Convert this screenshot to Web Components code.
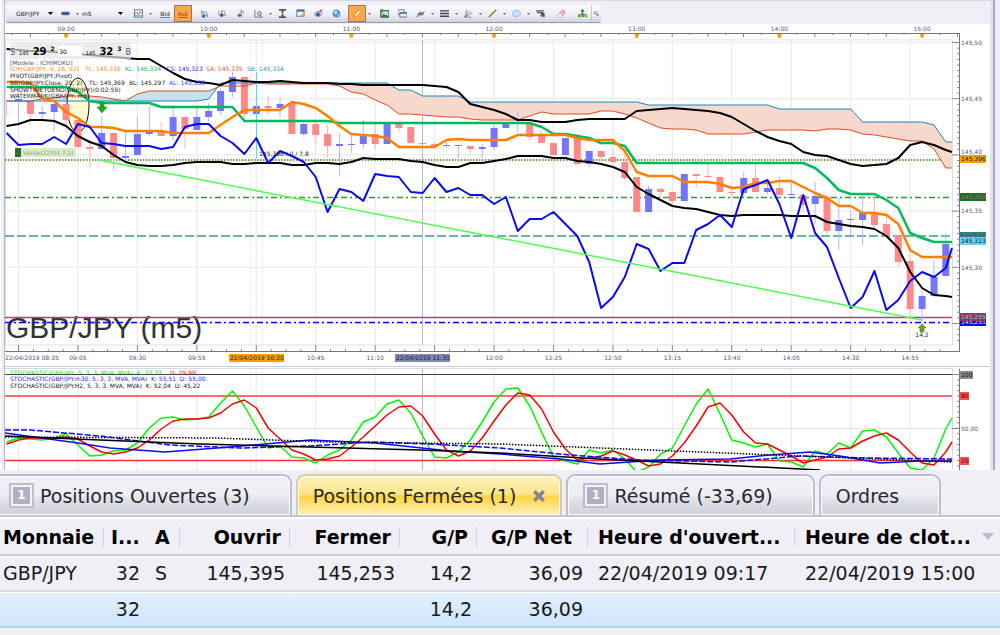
<!DOCTYPE html>
<html lang="fr">
<head>
<meta charset="utf-8">
<title>GBP/JPY (m5)</title>
<style>
  body {
    margin: 0;
    background: #efeff5;
    font-family: "DejaVu Sans", Verdana, sans-serif;
    color: #1a1a1a;
  }
</style>
</head>
<body>
<trading-desk></trading-desk>

<script>
  // ---------- icons, all on a 10x10 grid ----------
  const ICONS = {
    link: '<rect x="0" y="3" width="10" height="4" rx="2" fill="#50709c"/><path d="M2 5h6" stroke="#24405f"/>',
    chart: '<rect x=".5" y="1" width="9" height="8" fill="#fff" stroke="#3f76b4"/><path d="M1 6l2-2 2 2 2-3 2 2" fill="none" stroke="#c33"/><path d="M1 7.500h8" stroke="#4a4" />',
    zoom1: '<path d="M2 1v6M1 3h2M4 3v3" stroke="#777" stroke-width=".8"/><circle cx="6" cy="5" r="1.800" fill="#fff" stroke="#888"/><path d="M7 6l2 3" stroke="#555"/><circle cx="4" cy="8" r="1.800" fill="#3165b5"/>',
    zoom2: '<path d="M1 2v5M4 1v4" stroke="#777" stroke-width=".8"/><circle cx="6" cy="4" r="1.800" fill="#fff" stroke="#888"/><path d="M7 6l2 2" stroke="#555"/><circle cx="4" cy="7" r="2" fill="#2d5fae"/>',
    zoom3: '<path d="M6 0v8M4 3h4M8 2v4" stroke="#888" stroke-width=".8"/><circle cx="4" cy="7" r="2" fill="#3a70c0"/>',
    find: '<path d="M1 1v8h8" fill="none" stroke="#777"/><circle cx="6" cy="5" r="2" fill="#dfe6ef" stroke="#555"/><path d="M7 7l2 2" stroke="#555"/>',
    fit: '<path d="M1 1h8M1 9h8" stroke="#222" stroke-width="1.500"/><path d="M5 1v8" stroke="#222"/><path d="M3 2.500h4L5 5zM3 7.500h4L5 5z" fill="#3c8a2d"/>',
    note: '<rect x="1" y="1" width="8" height="7" fill="#fff" stroke="#3f70b0"/><path d="M1 2h8" stroke="#3f70b0" stroke-width="2"/><path d="M4 8l5-4 1 2-5 3z" fill="#f3a51c"/>',
    eye: '<path d="M0 6c3-4 7-4 9-1-2 4-6 4-9 1z" fill="#cfdcf0" stroke="#678"/><circle cx="4.500" cy="6" r="2" fill="#24589f"/><path d="M6 3l3-2" stroke="#c33" stroke-width="1.500"/>',
    globe: '<circle cx="5" cy="5" r="4" fill="#4c9bd2" stroke="#5a94c0"/><path d="M2 3l3-1 1 2-2 2zM6 6l2-1-1 3z" fill="#d4eaf6"/>',
    pencil: '<path d="M1 9l1-3 5-5 2 2-5 5z" fill="#fff3bd" stroke="#a97b2e" stroke-width=".8"/>',
    image: '<rect x="1" y="2" width="9" height="7" fill="#cde7f5" stroke="#222"/><path d="M1 9l3-4 2 2 1-1 3 3z" fill="#2d8b2a"/><circle cx="2" cy="2" r="2" fill="#35a028"/>',
    window: '<path d="M0 1h7v5H0z" fill="#fff" stroke="#4b6b9b"/><path d="M2 4h8v5H2z" fill="#e7eef8" stroke="#4b6b9b"/><path d="M2 4.500h8" stroke="#4b6b9b" stroke-width="1.500"/>',
    fork: '<path d="M1 9l4-6M4 8l3-5M7 7l2-4M2 5l6 1" stroke="#444"/>',
    lines: '<path d="M0 2h10M0 5h10M0 8h10" stroke="#34445c" stroke-width="1.500"/>',
    fan: '<path d="M1 9l2-8M1 9l5-7M1 9l8-5M1 9h7" stroke="#666" stroke-width=".8"/>',
    line: '<path d="M1 9l8-8" stroke="#4a9a1c" stroke-width="1.500"/>',
    oval: '<ellipse cx="5" cy="5" rx="4.500" ry="3.500" fill="#c6e2fa" stroke="#8bb9e6"/>',
    text: '<path d="M0 2h9M1 4h7" stroke="#555" stroke-width="1.500"/><circle cx="7" cy="7" r="2" fill="#2d64bd"/><path d="M6 5h3v4" fill="none" stroke="#234"/>',
    eraser: '<path d="M1 7l5-6 3 2-4 6H2z" fill="#f6b9bd" stroke="#b06a72" stroke-width=".8"/><path d="M1 7l2-2 3 2-1 2H2z" fill="#fff"/>',
    tree: '<circle cx="5" cy="2" r="1.800" fill="#3c79c4"/><path d="M5 3v3M2 6h6" stroke="#333"/><rect x="0" y="6" width="3" height="3" fill="#5aa61e"/><rect x="4" y="6" width="3" height="3" fill="#5aa61e"/><rect x="8" y="6" width="2" height="3" fill="#5aa61e"/>',
    more: '<path d="M2 3h5M2 5h5" stroke="#888"/><path d="M5 6h4l-2 3z" fill="#777"/>'
  };

  // ---------- chart data: one value per 5 minute bar, first bar is -1 ----------
  const CHIKOU = [133,145,144,144,137,144,124,127,143,144,146,146,146,149,147,127,124,124,136,143,154,138,163,151,156,162,177,212,189,192,201,174,176,177,192,193,178,192,188,195,195,204,197,231,219,219,212,224,236,262,308,297,277,244,249,271,263,263,230,224,215,227,189,185,180,204,238,195,233,247,278,308,297,271,310,300,281,272,277,268,248];
  const TENKAN = [82,82,83,99,101,112,118,127,127,128,131,131,131,131,133,133,133,133,125,117,110,110,110,110,102,104,108,116,126,134,135,136,138,147,147,147,147,140,139,140,140,140,140,135,135,135,135,135,138,140,140,140,151,172,176,176,176,182,182,182,184,188,187,183,183,181,181,187,193,198,206,206,213,213,215,224,250,257,257,257,257];
  const KIJUN = [87,87,87,87,87,87,92,101,103,103,103,103,103,107,107,107,107,107,107,107,121,121,121,121,121,121,121,121,123,123,123,123,123,123,123,123,123,123,123,123,123,123,123,123,123,127,134,134,136,138,143,143,146,163,163,163,163,163,163,163,163,163,163,163,163,163,163,163,168,178,190,194,194,194,200,208,233,238,242,242,242];
  const BAND_UP = [49,50,51,51,52,53,54,55,56,57,58,59,59,66,73,79,82,83,85,80,81,82,82,81,82,83,83,83,84,84,85,85,85,85,85,85,86,87,92,104,107,110,114,120,120,122,122,122,120,119,119,119,119,111,110,109,108,109,110,111,113,117,124,131,137,141,144,152,155,156,160,164,166,165,164,158,145,142,145,150,152];
  const BAND_LOW = [126,124,120,120,121,126,136,142,146,155,162,165,166,166,165,163,162,162,162,164,164,163,163,163,165,165,163,163,164,162,158,159,159,159,161,162,165,167,167,163,163,161,159,156,156,156,158,158,161,162,164,167,172,187,194,200,206,208,209,212,215,216,215,215,215,215,216,216,216,222,224,226,227,229,236,248,272,288,295,296,297];
  const SPAN_A = [101,101,101,99,98,96,96,96,97,99,101,94,91,91,91,91,91,91,86,86,86,83,84,84,84,84,84,84,86,92,94,100,105,114,114,115,116,117,117,119,120,120,120,120,116,112,114,114,114,114,111,111,114,118,123,128,129,129,130,134,134,134,134,132,130,130,130,130,131,129,129,130,134,135,137,139,141,141,149,168,168];
  const SPAN_B = [101,101,101,101,101,101,101,101,101,101,101,101,101,101,101,101,101,99,83,83,83,83,83,83,83,83,83,83,83,83,83,83,83,90,90,96,96,96,96,102,102,102,102,102,102,102,102,102,102,102,102,102,102,102,105,105,105,105,105,105,105,105,105,105,105,109,109,109,109,109,109,109,122,122,122,122,122,122,125,142,142];
  // bar, high, body top, body bottom, low, up?
  const CANDLES = [
    [-1,101,108,108,117,0],[0,94,99,101,122,1],[1,101,101,114,125,0],[2,106,112,114,119,1],[3,100,104,112,131,1],[4,104,104,120,132,0],
    [5,120,120,147,147,0],[6,140,147,149,169,0],[7,116,133,149,149,1],[8,133,133,158,170,0],[9,132,156,158,162,1],[10,117,134,155,155,1],
    [11,106,132,134,136,1],[12,122,131,136,136,0],[13,105,117,136,141,1],[14,117,117,129,149,0],[15,108,117,130,130,1],[16,103,111,117,122,1],
    [17,88,91,111,115,1],[18,72,77,92,97,1],[19,77,77,114,124,0],[20,98,106,114,114,1],[21,96,106,108,115,0],[22,98,104,108,117,1],
    [23,103,103,134,134,0],[24,122,124,134,137,1],[25,122,124,135,145,0],[26,125,134,146,158,0],[27,134,144,146,175,1],[28,135,144,145,153,1],
    [29,120,134,144,149,1],[30,124,134,144,149,0],[31,124,124,144,144,1],[32,124,124,128,132,0],[33,127,127,143,143,0],[34,143,143,144,144,0],
    [35,142,144,146,146,0],[36,142,145,146,148,1],[37,145,145,146,158,1],[38,146,146,149,153,0],[39,144,147,149,158,1],[40,125,128,147,150,1],
    [41,123,123,128,128,1],[42,112,122,123,133,1],[43,123,123,137,140,0],[44,130,136,143,143,0],[45,143,143,155,156,0],[46,138,138,155,156,1],
    [47,134,136,164,166,0],[48,151,151,164,167,1],[49,151,151,157,159,0],[50,149,157,162,165,0],[51,152,162,178,180,0],[52,177,177,212,213,0],
    [53,186,189,212,212,1],[54,188,189,192,197,0],[55,192,192,201,204,0],[56,174,174,201,201,1],[57,174,174,176,187,0],[58,164,176,177,178,0],
    [59,175,177,192,192,0],[60,190,192,193,198,0],[61,172,178,193,196,1],[62,164,178,192,192,0],[63,180,188,192,194,1],[64,176,188,195,198,0],
    [65,182,194,195,195,1],[66,195,195,205,212,0],[67,182,196,204,224,1],[68,195,197,231,234,0],[69,198,220,231,250,1],[70,210,219,220,235,1],
    [71,195,213,220,245,1],[72,195,213,225,229,0],[73,212,224,236,238,0],[74,234,236,262,267,0],[75,247,261,309,317,0],[76,288,296,309,322,1],
    [77,261,277,296,297,1],[78,233,244,276,276,1]
  ];
  const STOCH_K = [442,438,439,440,438,434,445,456,455,451,450,443,428,418,417,420,419,417,403,391,406,427,448,446,457,458,463,455,450,440,422,417,404,400,413,436,457,458,452,440,422,402,389,388,406,432,457,461,464,450,453,450,459,472,467,454,448,426,404,389,414,440,443,447,444,461,462,467,451,454,443,448,431,430,437,453,468,470,458,429,418];
  const STOCH_D = [444,440,438,438,438,437,439,446,452,454,452,448,440,429,421,419,419,418,413,404,400,408,428,439,450,454,460,459,456,447,437,426,415,407,406,416,434,450,456,451,438,421,405,393,395,409,432,449,460,458,456,451,455,460,466,464,456,443,426,407,403,415,432,443,444,450,456,463,460,457,449,448,441,436,433,440,452,463,465,452,442];

  const LEFT = 5, RIGHT = 952, BAR = 11.889;
  const barX = k => Math.min(RIGHT, Math.max(LEFT, 18.5 + BAR * k));
  const pts = (arr, from = 0, to = arr.length) =>
    arr.slice(from, to).map((y, i) => barX(i + from - 1).toFixed(1) + ',' + y);
  const series = (arr, color, width) =>
    `<polyline points="${pts(arr).join(' ')}" fill="none" stroke="${color}" stroke-width="${width}" stroke-linejoin="round"/>`;
  const cloud = (from, to, color) =>
    `<polygon points="${pts(SPAN_A, from, to).concat(pts(SPAN_B, from, to).reverse()).join(' ')}" fill="${color}"/>`;
  const path = (p, color, width, dash = '') =>
    `<polyline points="${p}" fill="none" stroke="${color}" stroke-width="${width}" stroke-dasharray="${dash}"/>`;
  const line = (x1, y1, x2, y2, color, width = 1, dash = '') =>
    `<line x1="${x1}" y1="${y1}" x2="${x2}" y2="${y2}" stroke="${color}" stroke-width="${width}" stroke-dasharray="${dash}"/>`;
  const text = (x, y, str, color = '#55557f', anchor = 'start') =>
    `<text x="${x}" y="${y}" fill="${color}" text-anchor="${anchor}">${str}</text>`;
  const tag = (x, y, w, str, bg, color) =>
    `<rect x="${x}" y="${y}" width="${w}" height="8" fill="${bg}"/>` + text(x + 1, y + 6, str, color);

  const verticals = (top, bottom) => {
    let out = '';
    for (let k = 0; k < 79; k += 5) {
      out += line(barX(k), top, barX(k), bottom, '#e9e9e9');
    }
    out += line(250.5, top, 250.5, bottom, '#dcdcdc', 1, '1 2');
    out += line(262.5, top, 262.5, bottom, '#dcdcdc', 1, '1 2');
    return out + line(422.5, top, 422.5, bottom, '#b4b8d8');
  };

  const CHART_CSS = `
    :host { display: block; position: relative; background: #fff; }
    svg { display: block; width: 100%; height: auto; }
    text { font-family: "DejaVu Sans", Verdana, sans-serif; font-size: 6px; white-space: pre; }
    .watermark { font-family: "Liberation Sans", Arial, sans-serif; font-size: 30px; }
  `;

  class ToolButton extends HTMLElement {
    connectedCallback() {
      const root = this.attachShadow({mode: 'open'});
      const icon = ICONS[this.getAttribute('icon')];
      root.innerHTML = `
      <style>
        :host { display: flex; align-items: center; }
        button {
          width: 18px;
          height: 17px;
          padding: 0;
          border: 1px solid transparent;
          background: none;
          font: 6px "DejaVu Sans", sans-serif;
          color: #222;
          display: flex;
          align-items: center;
          justify-content: center;
        }
        :host([active]) .main { background: #ffa646; border-color: #8a7a70; }
        :host([narrow]) .main { width: 10px; border-left: 1px solid #c6c6d6; }
        .drop { width: 6px; }
        svg { width: 9px; height: 9px; display: block; }
        .drop svg { width: 3px; height: 2px; }
      </style>
      <button class="main" aria-label="${this.getAttribute('icon') || 'prix'}">
        ${icon ? `<svg viewBox="0 0 10 10">${icon}</svg>` : '<slot></slot>'}
      </button>
      ${this.hasAttribute('menu') ? '<button class="drop" aria-label="menu"><svg viewBox="0 0 3 2"><path d="M0 0h3L1.500 2z" fill="#667"/></svg></button>' : ''}
      `;
    }
  }
  customElements.define('tool-button', ToolButton);

  class ChartToolbar extends HTMLElement {
    connectedCallback() {
      this.attachShadow({mode: 'open'}).innerHTML = `
      <style>
        :host { display: flex; padding: 4px 0 1px 1px; background: #efeff5; border-top: 1px solid #d9d9e4; }
        .bar {
          display: flex;
          align-items: center;
          box-sizing: border-box;
          height: 18px;
          padding-left: 8px;
          background: linear-gradient(#fcfcfe, #ececf3 60%, #d0d0de);
          border-bottom: 1px solid #9a9ab6;
          border-radius: 2px;
        }
        .group { display: flex; margin-right: 3px; }
        select {
          appearance: none;
          height: 14px;
          padding: 0 2px;
          border: 0;
          background: transparent;
          font: 6px "DejaVu Sans", sans-serif;
          color: #222;
        }
        label { display: flex; align-items: center; }
        label svg { width: 5px; height: 3px; margin-right: 3px; }
        .pair { width: 34px; }
        .period { width: 38px; }
        .bid { border-bottom: 1px solid #3a8ee0; }
        .ask { color: #a33a10; border-bottom: 1px solid #c8501c; }
      </style>
      <div class="bar">
        <div class="group">
          <label><select class="pair" aria-label="Instrument"><option>GBP/JPY</option></select>
            <svg viewBox="0 0 5 3"><path d="M0 0h5L2.500 3z"/></svg></label>
          <tool-button icon="link" menu></tool-button>
          <label><select class="period" aria-label="Période"><option>m5</option></select>
            <svg viewBox="0 0 5 3"><path d="M0 0h5L2.500 3z"/></svg></label>
        </div>
        <div class="group"><tool-button icon="chart" menu></tool-button></div>
        <div class="group">
          <tool-button><span class="bid">Bid</span></tool-button>
          <tool-button active><span class="ask">Ask</span></tool-button>
        </div>
        <div class="group">
          <tool-button icon="zoom1"></tool-button>
          <tool-button icon="zoom2"></tool-button>
          <tool-button icon="zoom3"></tool-button>
          <tool-button icon="find" menu></tool-button>
          <tool-button icon="fit"></tool-button>
          <tool-button icon="note"></tool-button>
          <tool-button icon="eye"></tool-button>
          <tool-button icon="globe"></tool-button>
        </div>
        <div class="group"><tool-button icon="pencil" active menu></tool-button></div>
        <div class="group">
          <tool-button icon="image"></tool-button>
          <tool-button icon="window"></tool-button>
          <tool-button icon="fork" menu></tool-button>
          <tool-button icon="lines" menu></tool-button>
          <tool-button icon="fan" menu></tool-button>
          <tool-button icon="line" menu></tool-button>
          <tool-button icon="oval" menu></tool-button>
          <tool-button icon="text"></tool-button>
        </div>
        <div class="group"><tool-button icon="eraser"></tool-button></div>
        <tool-button icon="tree"></tool-button>
        <tool-button icon="more" narrow></tool-button>
      </div>
      `;
    }
  }
  customElements.define('chart-toolbar', ChartToolbar);

  // one-click sell / buy box over the chart
  class QuoteTicket extends HTMLElement {
    connectedCallback() {
      this.attachShadow({mode: 'open'}).innerHTML = `
      <style>
        :host {
          display: flex;
          align-items: center;
          justify-content: space-between;
          box-sizing: border-box;
          width: 121px;
          height: 16px;
          background: rgba(228, 228, 230, .7);
        }
        button {
          display: flex;
          align-items: baseline;
          gap: 4px;
          padding: 0;
          border: 0;
          background: none;
          font: 5px "DejaVu Sans", sans-serif;
          color: #000;
        }
        .side { font-size: 8px; color: #55557f; }
        b { font-size: 10px; }
        sup { font-size: 6px; font-weight: bold; line-height: 1; vertical-align: baseline; align-self: flex-start; }
        input {
          width: 24px;
          height: 10px;
          box-sizing: border-box;
          padding: 0 1px;
          border: 0;
          background: #fff;
          font: 6px "DejaVu Sans", sans-serif;
        }
      </style>
      <button><span class="side">S</span><span>145</span><b>29</b><sup>2</sup></button>
      <input value="30" aria-label="Quantité">
      <button><span>145</span><b>32</b><sup>3</sup><span class="side">B</span></button>
      `;
    }
  }
  customElements.define('quote-ticket', QuoteTicket);

  class PriceChart extends HTMLElement {
    connectedCallback() {
      this.attachShadow({mode: 'open'}).innerHTML = `
      <style>
        ${CHART_CSS}
        quote-ticket { position: absolute; left: 5px; top: 19px; }
      </style>
      <svg viewBox="5 24 985 342" role="img" aria-label="GBP/JPY">
        ${this.grid()}
        <text class="watermark" x="6" y="338" fill="#333">GBP/JPY (m5)</text>
        ${this.levels()}
        ${cloud(4, 19, '#c5e2ee')}
        ${cloud(21, SPAN_A.length, '#f7d8cc')}
        <ellipse cx="78" cy="105" rx="11" ry="27" fill="#fffbd2" stroke="#111"/>
        ${this.candles()}
        ${series(SPAN_A, '#dc4a20', 1)}
        ${series(SPAN_B, '#1585c5', 1)}
        ${line(256.5, 72, 256.5, 158, '#50dcff')}
        ${series(KIJUN, '#00bb5c', 2.5)}
        ${series(TENKAN, '#ff8000', 2.5)}
        ${series(BAND_UP, '#000', 2)}
        ${series(BAND_LOW, '#000', 2)}
        ${series(CHIKOU, '#0a0aef', 2)}
        ${line(101.5, 160.5, 922, 320, '#4cff4c', 1.5)}
        <path d="M100 102h4v5h3l-5 6-5-6h3z" fill="#22a822" stroke="#18861a" stroke-width=".5"/>
        <path d="M922 324l4 4h-2v4h-4v-4h-2z" fill="#6aa61c" stroke="#3a7a10" stroke-width=".5"/>
        ${text(922, 337, '14,2', '#222', 'middle')}
        <rect x="15" y="148" width="6" height="9" fill="#2f6d25"/>
        <rect x="21" y="148" width="55" height="9" fill="#dde9cf"/>
        ${text(23, 155, 'Vente(22/04,7,2)', '#8cab7d')}
        ${text(259, 156, '145,396 / 0 / 7,8', '#222')}
        ${this.legend()}
        ${this.priceAxis()}
        ${this.timeAxis()}
      </svg>
      <quote-ticket></quote-ticket>
      `;
    }

    grid() {
      let out = '<rect x="5.5" y="40" width="947" height="305" fill="none" stroke="#dce0ea"/>';
      for (let i = 0; i < 6; i++) {
        out += line(LEFT, 42.5 + i * 56.2, RIGHT, 42.5 + i * 56.2, '#e9e9e9');
      }
      return out + verticals(40, 345);
    }

    levels() {
      return line(LEFT, 160, RIGHT, 160, '#3c7a10', 1.5, '1.5 1.5')
        + line(LEFT, 197.5, RIGHT, 197.5, '#2f9a2f', 1.5, '6 3 2 3')
        + line(LEFT, 236, RIGHT, 236, '#3a9a94', 1.5, '9 3')
        + line(LEFT, 317.5, RIGHT, 317.5, '#a8447a', 1.5)
        + line(LEFT, 322.5, RIGHT, 322.5, '#0a0aff', 1.5, '6 3 2 3');
    }

    candles() {
      return CANDLES.map(([k, high, top, bottom, low, up]) => {
        const x = barX(k);
        const body = up ? '#7474ff' : '#ff8888';
        const wick = up ? '#b4b4ff' : '#ffb4b4';
        return line(x, high, x, low, wick)
          + (k < 0 ? '' : `<rect x="${(x - 3.5).toFixed(1)}" y="${top}" width="7" height="${bottom - top}" fill="${body}"/>`);
      }).join('');
    }

    legend() {
      return text(10, 65, '[Modele : ICHIMOKU]')
        + text(10, 71, 'ICH(GBP/JPY, 9, 26, 52)', '#ff8c1a')
        + text(85, 71, 'TL: 145,336', '#ff8c1a')
        + text(125, 71, 'KL: 145,334', '#16b35c')
        + text(166, 71, 'CS: 145,323', '#2a2aff')
        + text(206, 71, 'SA: 145,335', '#e05a30')
        + text(247, 71, 'SB: 145,334', '#2c93cc')
        + text(10, 78, 'PIVOT(GBP/JPY,Pivot)', '#222')
        + text(10, 85, 'BB(GBP/JPY.Close, 20, 2)', '#222')
        + text(89, 85, 'TL: 145,369', '#222')
        + text(129, 85, 'BL: 145,297', '#222')
        + text(169, 85, 'AL: 145,333', '#3a3aff')
        + text(10, 92, 'SHOWTIMETOEND(GBP/JPY)(0:02:59)', '#222')
        + text(10, 98, 'WATERMARK(GBP/JPY, m5)', '#222');
    }

    priceAxis() {
      let out = line(959.5, 33, 959.5, 351, '#777');
      for (let i = 0; i < 54; i++) {
        const y = 42.5 + i * 5.62;
        out += i % 10 ? line(957, y, 959, y, '#888') : line(952, y, 959, y, '#888');
      }
      // 145,40 sits a little higher, clear of the 145,396 tag
      [['145,50', 45], ['145,45', 101], ['145,40', 154], ['145,35', 213], ['145,30', 270]].forEach(([p, y]) => {
        out += text(961, y, p);
      });
      return out
        + tag(960, 155, 26, '145,396', '#ff9c00', '#222')
        + tag(960, 193, 26, '145,362', '#0d7a0d', '#d040d0')
        + tag(960, 232, 26, '145,328', '#178888', '#d22')
        + tag(960, 237, 26, '145,323', '#5cd4ff', '#123')
        + tag(960, 318, 26, '145,251', '#0a0aef', '#ee4')
        + tag(960, 313, 26, '145,255', '#9c2f62', '#5cd4dd');
    }

    timeAxis() {
      let out = line(5, 33.5, 960, 33.5, '#777') + line(5, 351.5, 960, 351.5, '#777');
      for (let x = 12.5, i = 0; x < 958; x += 17.83, i++) {
        out += line(x, 34, x, i % 2 ? 37 : 35, '#888');
      }
      for (let x = 18.5, i = 0; x < 952; x += 14.86, i++) {
        out += line(x, i % 4 ? 349 : 345, x, 351, '#888');
      }
      for (let h = 0; h < 7; h++) {
        const x = barX(4 + h * 12);
        out += text(x, 31, String(h + 9).padStart(2, '0') + ':00', '#55557f', 'middle')
          + `<path d="M${x - 2.5} 34h5l-1.500 4h-2z" fill="#ffa200"/>`;
      }
      out += text(5, 360, '22/04/2019 08:35');
      ['09:05', '09:30', '09:55', '', '10:45', '11:10', '', '12:00', '12:25', '12:50', '13:15', '13:40', '14:05', '14:30', '14:55'].forEach((t, i) => {
        out += text(barX(5 + i * 5), 360, t, '#55557f', 'middle');
      });
      return out
        + tag(229, 354, 55, '22/04/2019 10:20', '#ff9c00', '#222')
        + tag(395, 354, 55, '22/04/2019 11:30', '#8088b8', '#222');
    }
  }
  customElements.define('price-chart', PriceChart);

  class StochasticChart extends HTMLElement {
    connectedCallback() {
      this.attachShadow({mode: 'open'}).innerHTML = `
      <style>${CHART_CSS} :host { border-top: 1px solid #c3cddf; }</style>
      <svg viewBox="5 367 985 103" role="img" aria-label="STOCHASTIC">
        <path d="M5 368.500h947.500V470" fill="none" stroke="#d4dae8"/>
        ${verticals(369, 470)}
        ${line(LEFT, 428.5, RIGHT, 428.5, '#e4e4e4')}
        ${text(10, 375, 'STOCHASTIC(GBP/JPY, 5, 3, 3, MVA, MVA)  K: 33,33', '#00f000')}
        ${text(170, 375, 'D: 29,99', '#f00')}
        ${line(LEFT, 374.5, RIGHT, 374.5, '#444')}
        ${text(10, 381, 'STOCHASTIC(GBP/JPY.m30, 5, 3, 3, MVA, MVA)  K: 55,51  D: 55,00', '#2a2aff')}
        ${text(10, 388, 'STOCHASTIC(GBP/JPY.H2, 5, 3, 3, MVA, MVA)  K: 52,04  D: 45,22', '#222')}
        ${line(LEFT, 396, RIGHT, 396, '#ff6a6a', 2)}
        ${line(LEFT, 460.5, RIGHT, 460.5, '#ff3030', 1.5)}
        ${series(STOCH_K, '#00f800', 1.5)}
        ${series(STOCH_D, '#f80000', 1.5)}
        ${path('5,433 78,443 110,448 165,452 230,447 310,440 375,443 450,451 500,454 560,459 600,464 660,460 730,459 770,455 810,452 840,456 880,463 920,461 952,461', '#0a0aff', 1.5)}
        ${path('5,430 30,430 100,436 170,445 240,448 310,446 370,442 430,444 500,448 570,455 640,460 730,462 800,456 870,458 952,459', '#0a0aff', 1.5, '6 2')}
        ${path('5,436 100,440 200,444 310,447 420,450 500,453 600,459 700,464 820,470', '#000', 1.5)}
        ${path('5,437 215,438 330,442 500,444 600,448 700,452 800,456 952,462', '#000', 1.5, '1.500 1.500')}
        ${this.axis()}
      </svg>
      `;
    }

    axis() {
      let out = line(959.5, 369, 959.5, 470, '#777');
      for (let y = 374.5; y < 470; y += 5.38) {
        out += line(957, y, 959, y, '#888');
      }
      return out
        + line(952, 374.5, 959, 374.5, '#888')
        + line(952, 428.5, 959, 428.5, '#888')
        + tag(960, 371, 13, '100', '#8c8c8c', '#111')
        + tag(960, 392, 9, '80', '#ff5050', '#500')
        + text(961, 431, '50,00')
        + tag(960, 457, 9, '20', '#ff5050', '#500');
    }
  }
  customElements.define('stochastic-chart', StochasticChart);

  class PositionTab extends HTMLElement {
    connectedCallback() {
      this.attachShadow({mode: 'open'}).innerHTML = `
      <style>
        :host { display: block; }
        button {
          display: flex;
          align-items: center;
          height: 41px;
          padding: 0 40px 0 15px;
          border: 2px solid #bcbcd2;
          border-bottom: 0;
          border-radius: 9px 9px 0 0;
          box-shadow: inset 0 0 0 1px #fff;
          background: linear-gradient(#efeff5 45%, #e1e1ea 60%, #d0d0dc);
          font: 19px "DejaVu Sans", Verdana, sans-serif;
          color: #2a2a2a;
          white-space: nowrap;
        }
        :host([selected]) button {
          padding-right: 14px;
          border-color: #d6cfae;
          background: linear-gradient(#fdf2bd, #fde58c 45%, #ffd640 52%, #ffe07a 75%, #fff0b4);
        }
        .badge {
          width: 17px;
          height: 17px;
          margin: 0 8px 0 2px;
          border: 2px solid #f3f3f8;
          outline: 2px solid #bdbdcd;
          background: #b0b0c4;
          color: #fff;
          font: bold 12px/17px "DejaVu Sans", sans-serif;
        }
        .close { width: 14px; height: 14px; margin-left: 16px; }
      </style>
      <button role="tab">
        ${this.hasAttribute('badge') ? `<span class="badge">${this.getAttribute('badge')}</span>` : ''}
        <slot></slot>
        ${this.hasAttribute('selected') ? '<svg class="close" viewBox="0 0 12 12"><path d="M2 2l8 8M10 2l-8 8" stroke="#8582a0" stroke-width="3"/></svg>' : ''}
      </button>
      `;
    }
  }
  customElements.define('position-tab', PositionTab);

  class PositionsTable extends HTMLElement {
    connectedCallback() {
      this.attachShadow({mode: 'open'}).innerHTML = `
      <style>
        :host { display: block; border-top: 2px solid #fff; }
        table { width: 100%; table-layout: fixed; border-collapse: collapse; font-size: 19px; line-height: 22px; }
        th, td { padding: 0 5px 0 3px; text-align: right; white-space: nowrap; overflow: hidden; }
        th {
          height: 35px;
          padding-right: 9px;
          font-weight: bold;
          color: #000;
          border-bottom: 2px solid #c8c8dc;
          background: linear-gradient(#d3d3df, #d3d3df) right center / 1px 20px no-repeat;
        }
        td { height: 34px; border-bottom: 2px solid #d8d8e2; box-shadow: inset 0 1px #fff; }
        .start { text-align: left; padding-left: 10px; }
        .first { text-align: left; padding-left: 3px; padding-right: 0; }
        th.tight { padding-left: 7px; padding-right: 0; background: none; }
        td.tight { padding-right: 3px; padding-left: 0; }
        .action { padding-left: 12px; padding-right: 0; text-align: left; }
        th.net { padding-right: 16px; }
        th.sort { background: none; padding-right: 6px; }
        .head { display: flex; align-items: center; justify-content: space-between; }
        .head svg { width: 12px; height: 8px; }
        .total td { background: linear-gradient(#e3f1ff, #cde5fc); border-color: #b5d2e6; }
      </style>
      <table>
        <colgroup>
          <col style="width: 10.400%"><col style="width: 3.900%"><col style="width: 3.700%">
          <col style="width: 11%"><col style="width: 11%"><col style="width: 7.700%">
          <col style="width: 11.100%"><col style="width: 20.700%"><col>
        </colgroup>
        <thead>
          <tr>
            <th class="first">Monnaie</th><th class="start tight">I...</th><th class="action">A</th>
            <th>Ouvrir</th><th>Fermer</th><th>G/P</th><th class="net">G/P Net</th>
            <th class="start">Heure d'ouvert...</th>
            <th class="start sort"><span class="head">Heure de clot...
              <svg viewBox="0 0 12 8"><path d="M0 0h12L6 7z" fill="#bcbcd2"/></svg></span></th>
          </tr>
        </thead>
        <tbody>
          <tr>
            <td class="first">GBP/JPY</td><td class="tight">32</td><td class="action">S</td>
            <td>145,395</td><td>145,253</td><td>14,2</td><td>36,09</td>
            <td class="start">22/04/2019 09:17</td><td class="start">22/04/2019 15:00</td>
          </tr>
          <tr class="total">
            <td></td><td class="tight">32</td><td></td><td></td><td></td>
            <td>14,2</td><td>36,09</td><td></td><td></td>
          </tr>
        </tbody>
      </table>
      `;
    }
  }
  customElements.define('positions-table', PositionsTable);

  class TradingDesk extends HTMLElement {
    connectedCallback() {
      this.attachShadow({mode: 'open'}).innerHTML = `
      <style>
        :host { display: block; overflow: hidden; }
        .charts {
          border-left: 1px solid #fff;
          padding: 0 7px 0 3px;
          background: linear-gradient(#a9a9c0, #a9a9c0) right 5px top / 2px 100% no-repeat, #efeff5;
        }
        .inner { border-left: 1px solid #b4b4ca; border-right: 3px solid #e4e4ee; }
        .tabs {
          display: flex;
          gap: 4px;
          margin-left: -8px;
          padding-top: 4px;
          border-bottom: 2px solid #c3c3d6;
        }
      </style>
      <section class="charts">
        <div class="inner">
          <chart-toolbar></chart-toolbar>
          <price-chart></price-chart>
          <stochastic-chart></stochastic-chart>
        </div>
      </section>
      <div class="tabs" role="tablist">
        <position-tab badge="1">Positions Ouvertes (3)</position-tab>
        <position-tab selected>Positions Fermées (1)</position-tab>
        <position-tab badge="1">Résumé (-33,69)</position-tab>
        <position-tab>Ordres</position-tab>
      </div>
      <positions-table></positions-table>
      `;
    }
  }
  customElements.define('trading-desk', TradingDesk);
</script>
</body>
</html>
